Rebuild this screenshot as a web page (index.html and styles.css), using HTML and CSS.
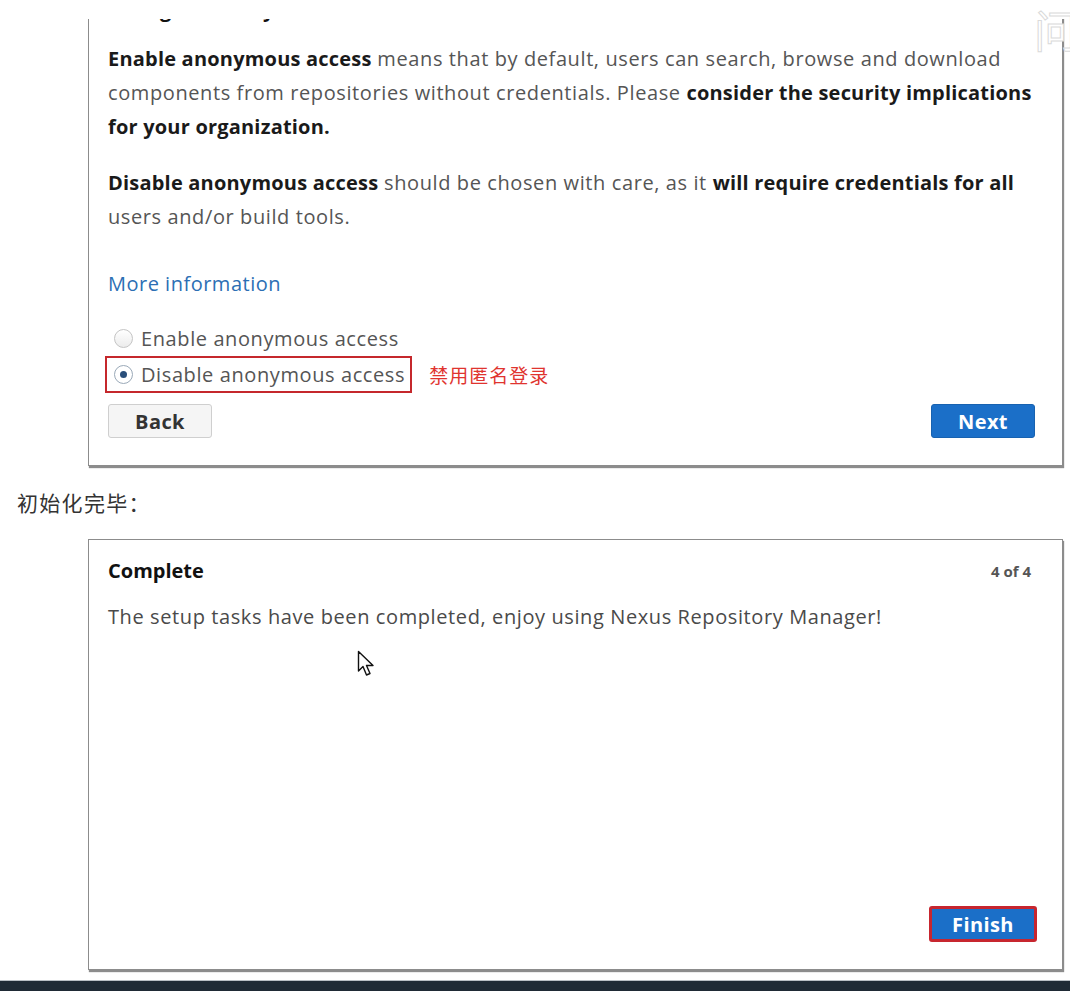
FILE: index.html
```html
<!DOCTYPE html>
<html lang="en">
<head>
<meta charset="utf-8">
<title>Nexus setup</title>
<link rel="stylesheet" href="styles.css">
</head>
<body>
<div class="page">
  <section class="card card-access">
    <h2 class="card-title">Configure Anonymous Access</h2>
    <p class="para"><b>Enable anonymous access</b> means that by default, users can search, browse and download components from repositories without credentials. Please <b>consider the security implications for your organization.</b></p>
    <p class="para"><b>Disable anonymous access</b> should be chosen with care, as it <b>will require credentials for all</b> users and/or build tools.</p>
    <p class="more"><a href="#" class="link">More information</a></p>
    <div class="radios">
      <label class="radio-row"><span class="radio"></span><span>Enable anonymous access</span></label>
      <div class="radio-line">
        <label class="radio-row marked"><span class="radio checked"></span><span>Disable anonymous access</span></label>
        <span class="note">禁用匿名登录</span>
      </div>
    </div>
    <div class="actions">
      <button class="btn btn-back">Back</button>
      <button class="btn btn-primary">Next</button>
    </div>
  </section>

  <p class="caption">初始化完毕：</p>

  <section class="card card-complete">
    <div class="head">
      <h2 class="complete-title">Complete</h2>
      <span class="step">4 of 4</span>
    </div>
    <p class="para plain">The setup tasks have been completed, enjoy using Nexus Repository Manager!</p>
    <div class="actions end">
      <button class="btn btn-primary btn-finish">Finish</button>
    </div>
    <svg class="cursor" width="20" height="28" viewBox="0 0 20 28"><path d="M1.5 1.5 L1.5 21 L6 16.5 L9.5 25 L13 23.5 L9.5 15.5 L16 15.5 Z" fill="#fff" stroke="#111" stroke-width="1.4" stroke-linejoin="round"/></svg>
  </section>
</div>
<div class="top-mask"></div>
<span class="watermark">问</span>
<div class="taskbar"></div>
</body>
</html>
```

FILE: styles.css
```css
* { box-sizing: border-box; }
html, body { margin: 0; padding: 0; background: #fff; }
body {
  font-family: "Open Sans", "Noto Sans", Arial, sans-serif;
  color: #555;
  height: 991px;
  overflow: hidden;
  position: relative;
}
.card {
  position: relative;
  margin-left: 88px;
  width: 975px;
  border: 1px solid #8c8c8c;
  box-shadow: 1px 2px 1px rgba(0,0,0,0.45);
  background: #fff;
  padding: 0 27px 0 19px;
}
.card-access {
  margin-top: -14px;
  padding-top: 10px;
  padding-bottom: 27px;
}
.card-title {
  margin: 0;
  font-size: 20px;
  line-height: 26px;
  font-weight: 700;
  color: #111;
}
.para {
  margin: 19px -16px 0 0;
  font-size: 20px;
  line-height: 34px;
  letter-spacing: 0.6px;
  color: #555;
}
.para + .para { margin-top: 22px; }
.para b { color: #1a1a1a; font-weight: 700; letter-spacing: 0.2px; }
.more { margin: 33px 0 0; font-size: 20px; line-height: 34px; letter-spacing: 0.5px; }
.link { color: #2c6fb4; text-decoration: none; }
.radios { margin-top: 20px; margin-left: -3px; }
.radio-line { display: flex; align-items: center; gap: 17px; }
.radio-row {
  display: inline-flex;
  align-items: center;
  gap: 8px;
  height: 35px;
  padding: 0 5px 0 7px;
  border: 2px solid transparent;
  font-size: 20px;
  letter-spacing: 0.6px;
  color: #555;
}
.radio-row.marked { border-color: #c5282c; height: 37px; }
.radio {
  width: 19px; height: 19px;
  border-radius: 50%;
  border: 1px solid #c4c4c4;
  background: linear-gradient(#fff, #ececec);
  display: inline-flex; align-items: center; justify-content: center;
  flex: none;
}
.radio.checked { border-color: #9aa9b8; background: #fff; }
.radio.checked::after {
  content: ""; width: 7px; height: 7px; border-radius: 50%; background: #2a4f7a;
}
.note { color: #e0342f; font-size: 19px; letter-spacing: 1px; font-family: "Noto Sans CJK SC", sans-serif; }
.actions { display: flex; justify-content: space-between; margin-top: 11px; }
.actions.end { justify-content: flex-end; margin-top: auto; }
.btn {
  width: 104px; height: 34px;
  font-family: "Open Sans", Arial, sans-serif;
  font-size: 20px; font-weight: 700; letter-spacing: 0.4px;
  border-radius: 3px;
  padding: 0;
}
.btn-back { background: #f5f5f5; border: 1px solid #cfcfcf; color: #333; }
.btn-primary { background: #1b6fc8; border: 1px solid #1862b0; color: #fff; }
.caption {
  margin: 22px 0 0 17px;
  font-size: 21px; line-height: 28px; letter-spacing: 1.3px;
  color: #333;
  font-family: "Noto Sans CJK SC", sans-serif;
}
.card-complete {
  margin-top: 23px;
  height: 431px;
  padding-top: 17px;
  padding-bottom: 27px;
  display: flex; flex-direction: column;
}
.head { display: flex; justify-content: space-between; align-items: center; padding-right: 4px; }
.complete-title { margin: 0; font-size: 20px; line-height: 28px; color: #111; font-weight: 700; }
.step { font-size: 15px; font-weight: 700; color: #555; }
.plain { margin-top: 15px; color: #4a4a4a; }
.btn-finish { width: 108px; height: 36px; border: 3px solid #c7262f; margin-right: -2px; }
.cursor { position: absolute; left: 268px; top: 110px; }
.top-mask { position: absolute; left: 0; top: 0; width: 100%; height: 19px; background: #fff; }
.watermark {
  position: absolute; right: -8px; top: 4px;
  font-size: 44px; line-height: 50px; color: #fff;
  -webkit-text-stroke: 1px #dadada;
  font-family: "Noto Sans CJK SC", sans-serif;
}
.taskbar {
  position: absolute; left: 0; right: 0; bottom: 0; height: 11px;
  background: #1f2a35;
  border-top: 1px solid #b9bec4;
}
```
